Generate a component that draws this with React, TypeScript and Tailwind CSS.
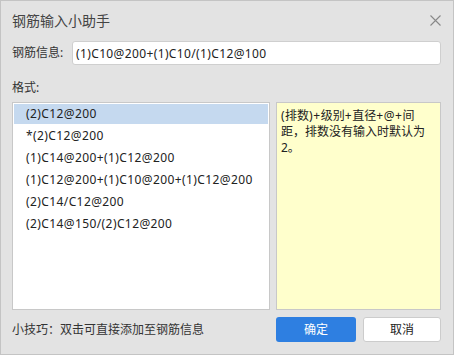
import React, { useState } from "react";

const formats = [
  "(2)C12@200",
  "*(2)C12@200",
  "(1)C14@200+(1)C12@200",
  "(1)C12@200+(1)C10@200+(1)C12@200",
  "(2)C14/C12@200",
  "(2)C14@150/(2)C12@200",
];

const App = () => {
  const [value, setValue] = useState("(1)C10@200+(1)C10/(1)C12@100");
  const [selected, setSelected] = useState(0);

  return (
    <div
      className="w-[454px] h-[355px] border border-[#c4c4c4] bg-[#e3e3e3] flex flex-col text-[#333] text-[12px]"
      style={{ fontFamily: '"Noto Sans", "Noto Sans CJK SC", sans-serif' }}
    >
      {/* title bar */}
      <div className="h-[38px] flex items-center justify-between pl-[11px] pr-[12px]">
        <span className="text-[14px] text-[#444]">钢筋输入小助手</span>
        <svg width="11" height="11" viewBox="0 0 11 11" className="text-[#888]">
          <path d="M0.5 0.5 L10.5 10.5 M10.5 0.5 L0.5 10.5" stroke="currentColor" strokeWidth="1.1" />
        </svg>
      </div>

      <div className="mt-[2px] h-[24px] flex items-center pl-[11px] pr-[12px]">
        <span className="w-[60px]">钢筋信息:</span>
        <input
          className="flex-1 h-[24px] rounded-[3px] border border-[#cfcfcf] bg-white px-[3px] text-[12px] tracking-[0.37px] text-[#222] outline-none"
          value={value}
          onChange={(e) => setValue(e.target.value)}
        />
      </div>

      <div className="mt-[13px] h-[20px] flex items-center pl-[11px]">格式:</div>

      <div className="mt-[4px] flex gap-[6px] pl-[11px] pr-[12px]">
        <div className="w-[258px] h-[208px] border border-[#c8c8c8] bg-white flex flex-col gap-[2px] p-[1px]">
          {formats.map((f, i) => (
            <div
              key={f}
              onClick={() => setSelected(i)}
              className={`h-[20px] pl-[12px] flex items-center cursor-default text-[#222] tracking-[0.4px] ${
                selected === i ? "bg-[#c5d9ef]" : ""
              }`}
            >
              {f}
            </div>
          ))}
        </div>
        <div className="flex-1 h-[208px] border border-[#c8c8c8] bg-[#ffffcc] pl-[4px] pr-[6px] pt-[5px] leading-[16px] text-[#222]">
          <span className="tracking-[0.4px]">(</span>排数<span className="tracking-[0.6px]">)+</span>级别
          <span className="tracking-[0.6px]">+</span>直径<span className="tracking-[0.6px]">+@+</span>间
          <br />
          距，排数没有输入时默认为
          <br />
          2。
        </div>
      </div>

      <div className="mt-[7px] flex items-center pl-[11px] pr-[12px]">
        <span className="flex-1">小技巧：双击可直接添加至钢筋信息</span>
        <button className="w-[80px] h-[25px] rounded-[3px] bg-[#2e7fe1] text-white text-[12px]">
          确定
        </button>
        <button className="ml-[7px] w-[78px] h-[25px] rounded-[3px] border border-[#cccccc] bg-white text-[12px] text-[#222]">
          取消
        </button>
      </div>
    </div>
  );
};

export default App;
